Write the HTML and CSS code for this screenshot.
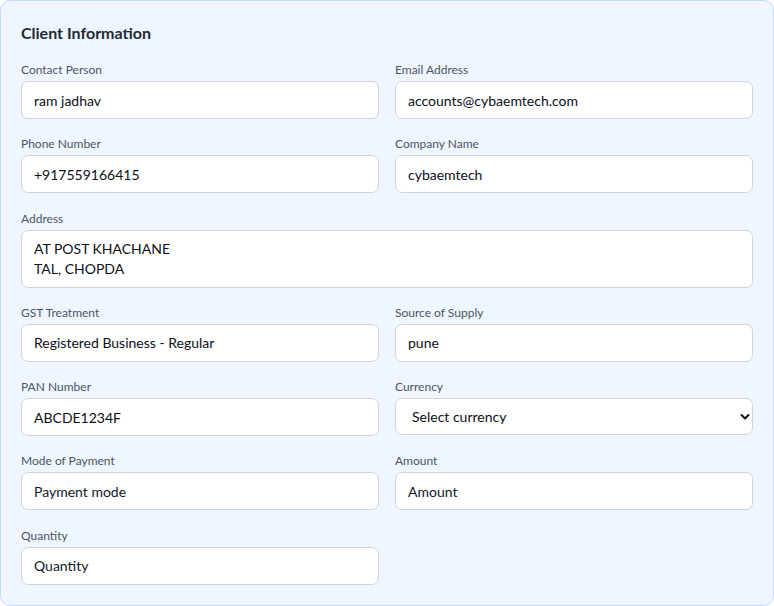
FILE: index.html
```html
<!DOCTYPE html>
<html lang="en">
<head>
<meta charset="utf-8">
<title>Client Information</title>
<link rel="stylesheet" href="styles.css">
</head>
<body>
<section class="card">
  <h2 class="title">Client Information</h2>
  <div class="grid">
    <label class="field">
      <span class="label">Contact Person</span>
      <input class="input" type="text" value="ram jadhav">
    </label>
    <label class="field">
      <span class="label">Email Address</span>
      <input class="input" type="text" value="accounts@cybaemtech.com">
    </label>
    <label class="field">
      <span class="label">Phone Number</span>
      <input class="input" type="text" value="+917559166415">
    </label>
    <label class="field">
      <span class="label">Company Name</span>
      <input class="input" type="text" value="cybaemtech">
    </label>
    <label class="field wide">
      <span class="label">Address</span>
      <textarea class="input area">AT POST KHACHANE
TAL, CHOPDA</textarea>
    </label>
    <label class="field">
      <span class="label">GST Treatment</span>
      <input class="input" type="text" value="Registered Business - Regular">
    </label>
    <label class="field">
      <span class="label">Source of Supply</span>
      <input class="input" type="text" value="pune">
    </label>
    <label class="field">
      <span class="label">PAN Number</span>
      <input class="input" type="text" value="ABCDE1234F">
    </label>
    <label class="field">
      <span class="label">Currency</span>
      <span class="select-wrap">
        <select class="select">
          <option>Select currency</option>
        </select>
        <svg class="chev" width="10" height="8" viewBox="0 0 10 8"><path d="M1.5 2 L5 5.5 L8.5 2" fill="none" stroke="#111" stroke-width="2" stroke-linecap="round" stroke-linejoin="round"/></svg>
      </span>
    </label>
    <label class="field">
      <span class="label">Mode of Payment</span>
      <input class="input" type="text" placeholder="Payment mode">
    </label>
    <label class="field">
      <span class="label">Amount</span>
      <input class="input" type="text" placeholder="Amount">
    </label>
    <label class="field">
      <span class="label">Quantity</span>
      <input class="input" type="text" placeholder="Quantity">
    </label>
  </div>
</section>
</body>
</html>
```
FILE: styles.css
```css
* { box-sizing: border-box; }
html, body { margin: 0; padding: 0; background: #ffffff; }
body { font-family: Lato, "Liberation Sans", sans-serif; }

.card {
  width: 774px;
  height: 606px;
  background: #eff6ff;
  border: 1px solid #bfdbfe;
  border-radius: 10px;
  padding: 22px 20px 20px 20px;
}

.title {
  margin: 0 0 19px 0;
  font-size: 16px;
  line-height: 20px;
  font-weight: 700;
  color: #1f2937;
}

.grid {
  display: grid;
  grid-template-columns: 358px 358px;
  column-gap: 16px;
  row-gap: 17.25px;
}

.field { display: flex; flex-direction: column; }
.wide { grid-column: 1 / span 2; }

.label {
  font-size: 12px;
  line-height: 16px;
  color: #4b5563;
  margin-bottom: 3px;
}

.input {
  height: 38px;
  width: 100%;
  border: 1px solid #d1d5db;
  border-radius: 7px;
  background: #ffffff;
  padding: 0 12px;
  font-family: Lato, "Liberation Sans", sans-serif;
  font-size: 14px;
  color: #0b0f19;
  outline: none;
}
.input::placeholder { color: #111827; opacity: 1; }

.area {
  height: 58px;
  padding: 8px 12px;
  line-height: 20px;
  resize: none;
}

.select-wrap { position: relative; display: block; }
.select {
  -webkit-appearance: none;
  appearance: none;
  display: block;
  width: 100%;
  height: 37px;
  border: 1px solid #d1d5db;
  border-radius: 7px;
  background: #ffffff;
  padding: 0 16px;
  font-family: Lato, "Liberation Sans", sans-serif;
  font-size: 14px;
  color: #0b0f19;
  outline: none;
}
.chev {
  position: absolute;
  right: 3px;
  top: 15px;
}
```
